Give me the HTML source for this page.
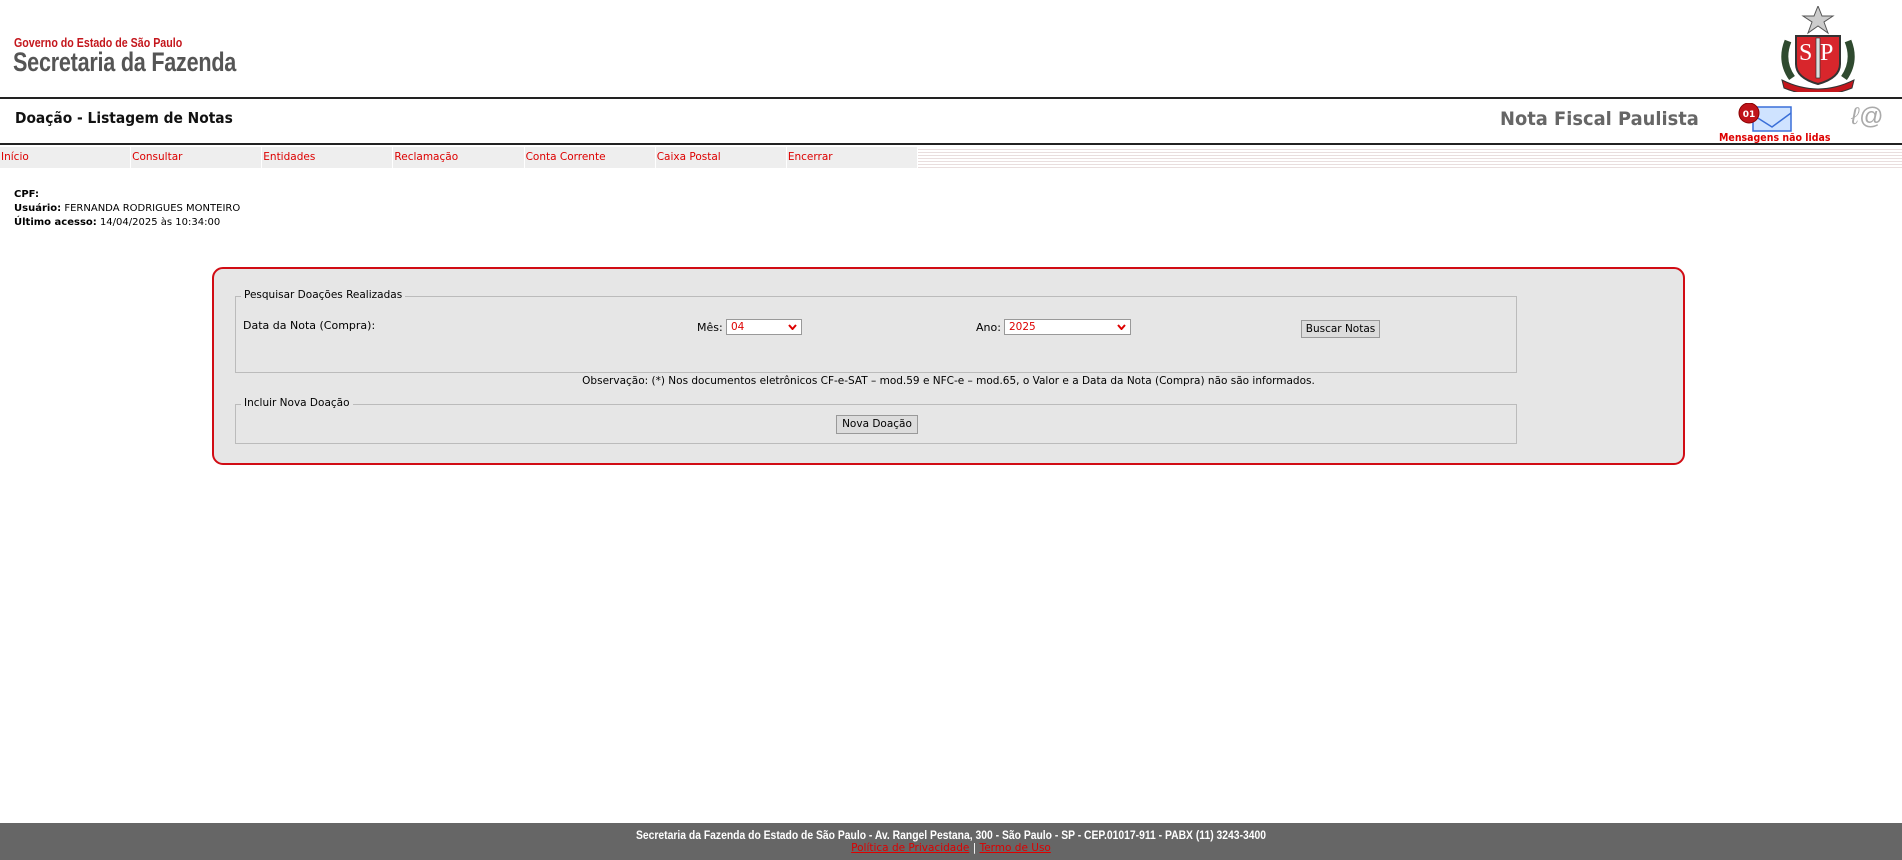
<!DOCTYPE html>
<html><head><meta charset="utf-8"><style>
*{margin:0;padding:0;box-sizing:border-box}
body{width:1902px;height:860px;position:relative;background:#fff;font-family:"DejaVu Sans","Liberation Sans",sans-serif;font-size:11px;color:#000;overflow:hidden}
.a{position:absolute;white-space:nowrap}
.gov{left:14px;top:35px;font-family:"Liberation Sans",sans-serif;font-weight:bold;color:#c4161c;font-size:13px;transform:scaleX(.82);transform-origin:left}
.sec{left:13px;top:47px;font-family:"Liberation Sans",sans-serif;font-weight:bold;color:#555;font-size:27px;transform:scaleX(.8);transform-origin:left;letter-spacing:-.3px}
.hl{left:0;width:1902px;height:2px;background:#222}
.title{left:15px;top:109px;font-size:15px;font-weight:bold;color:#111;transform:scaleX(.92);transform-origin:left}
.nfp{left:1500px;top:108px;font-size:19px;font-weight:bold;color:#666;transform:scaleX(.94);transform-origin:left}
.menu{left:0;top:147px;height:21px;width:918px;display:flex}
.menu div{width:132px;background:#eee;margin-right:1px;color:#d00;font-size:10.5px;line-height:21px;padding-left:1px}
.stripes{left:918px;top:147px;width:984px;height:21px;background:repeating-linear-gradient(#fff 0 2px,#e9dede 2px 3px)}
.info{left:14px;top:188px;font-size:10px;line-height:14px}
.box{left:212px;top:267px;width:1473px;height:198px;border:2px solid #d10c14;border-radius:11px;background:#e6e6e6}
.fs{position:absolute;border:1px solid #bbb}
.lg{position:absolute;background:#e6e6e6;padding:0 3px;top:-8px;left:5px;font-size:10.5px}
.sel{position:absolute;height:16px;background:#fff;border:1px solid #999;color:#d00;font-size:10.5px;line-height:14px;padding-left:4px}
.sel svg{position:absolute;right:4px;top:4px}
.btn{position:absolute;background:#dcdcdc;border:1px solid #999;font-size:10.5px;text-align:center;line-height:16px}
.foot{left:0;top:823px;width:1902px;height:37px;background:#666;text-align:center;color:#fff}
</style></head><body>
<div class="a gov">Governo do Estado de São Paulo</div>
<div class="a sec">Secretaria da Fazenda</div>
<svg class="a" style="left:1778px;top:6px" width="80" height="86" viewBox="0 0 80 86">
<polygon points="40,0 44,10 55,10 46,16 50,27 40,20 30,27 34,16 25,10 36,10" fill="#ccc" stroke="#555"/>
<path d="M10,35 Q2,55 14,72 M70,35 Q78,55 66,72" stroke="#2f4a2f" stroke-width="7" fill="none"/>
<path d="M18,30 H62 V58 Q62,72 40,78 Q18,72 18,58 Z" fill="#d8262c" stroke="#333" stroke-width="2"/>
<text x="21" y="54" font-family="Liberation Serif" font-size="24" fill="#fff">S</text>
<text x="42" y="54" font-family="Liberation Serif" font-size="24" fill="#fff">P</text>
<rect x="38" y="32" width="4" height="40" fill="#ddd" stroke="#333" stroke-width=".7"/>
<path d="M4,74 Q40,92 76,74 L74,82 Q40,96 6,82 Z" fill="#c4161c" stroke="#333"/>
</svg>
<div class="a hl" style="top:97px"></div>
<div class="a title">Doação - Listagem de Notas</div>
<div class="a nfp">Nota Fiscal Paulista</div>
<svg class="a" style="left:1738px;top:103px" width="56" height="30" viewBox="0 0 56 30">
<rect x="15" y="4" width="38" height="24" fill="#cfe3ff" stroke="#3a6fd8" stroke-width="1.5"/>
<path d="M15,12 L34,24 L53,10" stroke="#3a6fd8" stroke-width="1.5" fill="none"/>
<circle cx="11" cy="10" r="10" fill="#c0141a" stroke="#800" stroke-width="1"/>
<text x="11" y="14" text-anchor="middle" font-family="DejaVu Sans" font-weight="bold" font-size="9" fill="#fff">01</text>
</svg>
<div class="a" style="left:1719px;top:132px;color:#d00;font-weight:bold;font-size:10.5px;transform:scaleX(.9);transform-origin:left">Mensagens não lidas</div>
<div class="a" style="left:1851px;top:103px;font-size:24px;color:#aaa;font-style:italic;font-family:'Liberation Sans'">&#8467;@</div>
<div class="a hl" style="top:143px"></div>
<div class="a menu"><div>Início</div><div>Consultar</div><div>Entidades</div><div>Reclamação</div><div>Conta Corrente</div><div>Caixa Postal</div><div>Encerrar</div></div>
<div class="a stripes"></div>
<div class="a info"><b>CPF:</b><br><b>Usuário:</b> FERNANDA RODRIGUES MONTEIRO<br><b>Último acesso:</b> 14/04/2025 às 10:34:00</div>
<div class="a box">
 <div class="fs" style="left:21px;top:27px;width:1282px;height:77px"><span class="lg">Pesquisar Doações Realizadas</span>
  <span class="a" style="left:7px;top:22px">Data da Nota (Compra):</span>
  <span class="a" style="left:461px;top:24px">Mês:</span>
  <div class="sel" style="left:490px;top:22px;width:76px">04<svg width="9" height="6"><path d="M1,1 L4.5,5 L8,1" stroke="#d00" stroke-width="2" fill="none"/></svg></div>
  <span class="a" style="left:740px;top:24px">Ano:</span>
  <div class="sel" style="left:768px;top:22px;width:127px">2025<svg width="9" height="6"><path d="M1,1 L4.5,5 L8,1" stroke="#d00" stroke-width="2" fill="none"/></svg></div>
  <div class="btn" style="left:1065px;top:23px;width:79px;height:18px">Buscar Notas</div>
 </div>
 <div class="a" style="left:0;width:1469px;text-align:center;top:106px;font-size:10.5px">Observação: (*) Nos documentos eletrônicos CF-e-SAT – mod.59 e NFC-e – mod.65, o Valor e a Data da Nota (Compra) não são informados.</div>
 <div class="fs" style="left:21px;top:135px;width:1282px;height:40px"><span class="lg">Incluir Nova Doação</span>
  <div class="btn" style="left:600px;top:10px;width:82px;height:19px">Nova Doação</div>
 </div>
</div>
<div class="a foot"><div style="font-family:'Liberation Sans',sans-serif;font-weight:bold;font-size:11.5px;margin-top:7px;transform:scaleX(.9)">Secretaria da Fazenda do Estado de São Paulo - Av. Rangel Pestana, 300 - São Paulo - SP - CEP.01017-911 - PABX (11) 3243-3400</div>
<div style="font-size:10.5px;line-height:13px"><u style="color:#d00">Política de Privacidade</u> | <u style="color:#d00">Termo de Uso</u></div></div>
</body></html>
